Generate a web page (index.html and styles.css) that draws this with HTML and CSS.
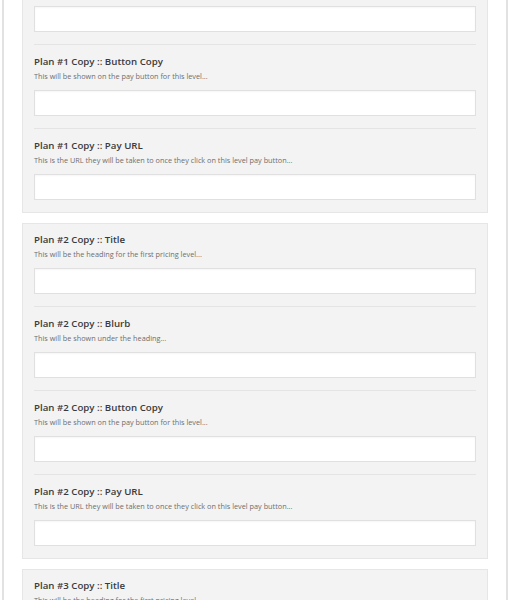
FILE: index.html
```html
<!DOCTYPE html>
<html lang="en">
<head>
    <meta charset="UTF-8">
    <meta name="viewport" content="width=device-width, initial-scale=1.0">
    <link rel="stylesheet" href="styles.css">
    <title>Pricing plans</title>
</head>
<body>
    <div class="wrap">
        <div class="box box-top">
            <div class="field field-cut">
                <input type="text" class="txt" name="plan1_blurb">
            </div>
            <div class="field">
                <label class="lbl" for="plan1_button">Plan #1 Copy :: Button Copy</label>
                <p class="desc">This will be shown on the pay button for this level...</p>
                <input type="text" class="txt" name="plan1_button" id="plan1_button">
            </div>
            <div class="field">
                <label class="lbl" for="plan1_url">Plan #1 Copy :: Pay URL</label>
                <p class="desc">This is the URL they will be taken to once they click on this level pay button...</p>
                <input type="text" class="txt" name="plan1_url" id="plan1_url">
            </div>
        </div>

        <div class="box">
            <div class="field">
                <label class="lbl" for="plan2_title">Plan #2 Copy :: Title</label>
                <p class="desc">This will be the heading for the first pricing level...</p>
                <input type="text" class="txt" name="plan2_title" id="plan2_title">
            </div>
            <div class="field">
                <label class="lbl" for="plan2_blurb">Plan #2 Copy :: Blurb</label>
                <p class="desc">This will be shown under the heading...</p>
                <input type="text" class="txt" name="plan2_blurb" id="plan2_blurb">
            </div>
            <div class="field">
                <label class="lbl" for="plan2_button">Plan #2 Copy :: Button Copy</label>
                <p class="desc">This will be shown on the pay button for this level...</p>
                <input type="text" class="txt" name="plan2_button" id="plan2_button">
            </div>
            <div class="field">
                <label class="lbl" for="plan2_url">Plan #2 Copy :: Pay URL</label>
                <p class="desc">This is the URL they will be taken to once they click on this level pay button...</p>
                <input type="text" class="txt" name="plan2_url" id="plan2_url">
            </div>
        </div>

        <div class="box">
            <div class="field">
                <label class="lbl" for="plan3_title">Plan #3 Copy :: Title</label>
                <p class="desc">This will be the heading for the first pricing level...</p>
                <input type="text" class="txt" name="plan3_title" id="plan3_title">
            </div>
        </div>
    </div>
</body>
</html>
```

FILE: styles.css
```css
*
{
    box-sizing: border-box;
    font-family: 'Open Sans', 'DejaVu Sans', sans-serif;
}
html, body{margin: 0;padding: 0;background: #fff;}
.wrap{
    margin: 0 2px;
    min-height: 600px;
    padding: 0 18px;
    border-left: 2px solid #e2e2e2;
    border-right: 2px solid #e2e2e2;
    overflow: hidden;
}
.box{
    background: #f3f3f3;
    border: 1px solid #e6e6e6;
    padding: 0 11px 12px;
    margin-bottom: 10px;
}
.box-top{border-top: none;}
.field{padding: 9px 0 12px;border-top: 1px solid #e4e4e4;}
.field:first-child{border-top: none;padding-top: 8px;}
.box .field:last-child{padding-bottom: 0;}
.field-cut{padding-top: 6px !important;}
.lbl{
    display: block;
    font-size: 9.7px;
    line-height: 16px;
    font-weight: 600;
    color: #3a3a3a;
}
.desc{
    margin: 0 0 8px;
    font-size: 7.3px;
    line-height: 12px;
    color: #6e6e6e;
}
.txt{
    display: block;
    width: 100%;
    height: 26px;
    margin: 0;
    background: #fff;
    border: 1px solid #e0e0e0;
    box-shadow: inset 0 1px 2px rgba(0,0,0,.04);
    outline: none;
}
```
